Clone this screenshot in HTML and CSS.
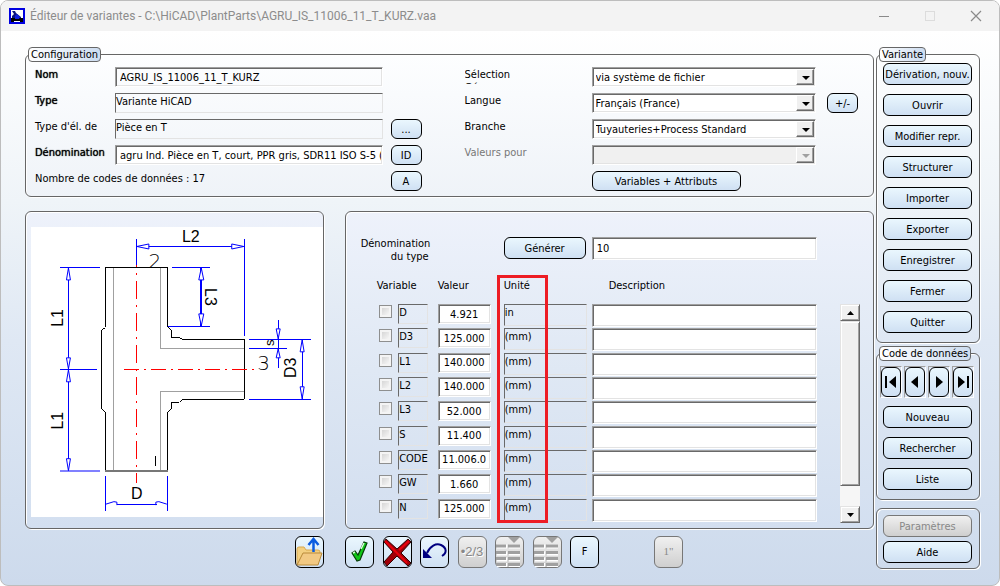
FILE: index.html
```html
<!DOCTYPE html>
<html lang="fr">
<head>
    <meta charset="UTF-8">
    <title>Éditeur de variantes</title>
    <link rel="stylesheet" href="styles.css">
</head>
<body>
    <div class="window">
        <header class="titlebar">
            <svg class="app-icon" width="16" height="16" viewBox="0 0 16 16">
                <rect x="1" y="1" width="14" height="14" fill="#fff" stroke="#0000e0" stroke-width="2"/>
                <path d="M3 3h3l1 2 5 4v2H3V8l2-2z" fill="#0a1480"/>
                <path d="M2 10h12v4h-3v-1H5v1H2z" fill="#000"/>
                <path d="M6 8l2-2 3 3-1 2H6z" fill="#1020e0"/>
            </svg>
            <h1>Éditeur de variantes - C:\HiCAD\PlantParts\AGRU_IS_11006_11_T_KURZ.vaa</h1>
            <div class="window-buttons">
                <button type="button" aria-label="Réduire"><svg width="12" height="12"><path d="M1 6.500h10" stroke="#8a8a8a"/></svg></button>
                <button type="button" aria-label="Agrandir" disabled><svg width="12" height="12"><rect x="1.500" y="1.500" width="9" height="9" fill="none" stroke="#dcdcdc"/></svg></button>
                <button type="button" aria-label="Fermer la fenêtre"><svg width="12" height="12"><path d="M1 1l10 10M11 1L1 11" stroke="#8a8a8a" stroke-width="1.200"/></svg></button>
            </div>
        </header>

        <div class="content">
            <main class="main">
                <!-- Configuration -->
                <fieldset class="group config">
                    <legend>Configuration</legend>
                    <div class="config-columns">
                        <div class="config-left">
                            <label class="strong" for="nom">Nom</label>
                            <input class="field plain padded" id="nom" type="text" value="AGRU_IS_11006_11_T_KURZ" readonly>
                            <span></span>

                            <span class="strong">Type</span>
                            <output class="display">Variante HiCAD</output>
                            <span></span>

                            <span>Type d'él. de</span>
                            <output class="display">Pièce en T</output>
                            <button type="button" class="btn">...</button>

                            <label class="strong" for="denomination">Dénomination</label>
                            <input class="field padded" id="denomination" type="text" value="agru Ind. Pièce en T, court, PPR gris, SDR11 ISO S-5 (">
                            <button type="button" class="btn">ID</button>

                            <span class="count">Nombre de codes de données : 17</span>
                            <button type="button" class="btn">A</button>
                        </div>
                        <div class="config-right">
                            <label class="clipped" for="selection">Sélection<br>Gé</label>
                            <div class="combo">
                                <select id="selection"><option>via système de fichier</option></select>
                            </div>
                            <span></span>

                            <label for="langue">Langue</label>
                            <div class="combo">
                                <select id="langue"><option>Français (France)</option></select>
                            </div>
                            <button type="button" class="btn">+/-</button>

                            <label for="branche">Branche</label>
                            <div class="combo">
                                <select id="branche"><option>Tuyauteries+Process Standard</option></select>
                            </div>
                            <span></span>

                            <label class="dimmed" for="valeurs">Valeurs pour</label>
                            <div class="combo disabled">
                                <select id="valeurs" disabled><option></option></select>
                            </div>
                            <span></span>

                            <span></span>
                            <button type="button" class="btn attributes">Variables + Attributs</button>
                        </div>
                    </div>
                </fieldset>

                <div class="panels">
                    <!-- Part drawing -->
                    <section class="group drawing">
                        <svg viewBox="0 0 292 290" shape-rendering="crispEdges">
                            <rect width="292" height="290" fill="#fff"/>
                            <g fill="none" stroke="#a0a0a0">
                                <path d="M82.500 41V244M129.500 41V121.500H213M213 164.500H129.500V244"/>
                            </g>
                            <g fill="none" stroke="#000">
                                <path d="M74.500 244.500V185.500L70.500 181.500V103.500L74.500 100.500V40.500H136.500V99.500L140.500 103.500V110.500H148.500L151.500 112.500H213.500V172.500H151.500L148.500 175.500H140.500V182.500L136.500 185.500V244.500"/>
                                <path d="M124.500 229v10"/>
                            </g>
                            <path d="M74 244.500h63" stroke="#777" stroke-width="2"/>
                            <g fill="none" stroke="#f00">
                                <path d="M105.500 38V256" stroke-dasharray="18 6 2 6" stroke-dashoffset="16"/>
                                <path d="M93 142.500H227" stroke-dasharray="15 5 2 5"/>
                            </g>
                            <g fill="none" stroke="#00f">
                                <path d="M105.500 12V38M213.500 12V109M106 19.500H213"/>
                                <path d="M29 40.500H69M29 142.500H66M37.500 41V244"/>
                                <path d="M141 40.500H179M137 99.500H179"/>
                                <path d="M170 41V99" stroke-width="2"/>
                                <path d="M218 112.500H280M218 121.500H256M218 172.500H280M247.500 93V141M271.500 113V172"/>
                                <path d="M74.500 249V284M136.500 249V284M86 277.500H126"/>
                                <path d="M29 244.500H69" stroke="#8080ff" stroke-width="2"/>
                            </g>
                            <g fill="#fff" stroke="#00f" shape-rendering="auto">
                                <path d="M106 19.500l12-2.500v5zM213 19.500l-12-2.500v5z"/>
                                <path d="M37.500 41l-2 12h4zM37.500 142l-2-11h4zM37.500 143l-2 12h4zM37.500 244l-2-12h4z"/>
                                <path d="M170.500 41l-2.500 12h5zM170.500 99l-2.500-12h5z"/>
                                <path d="M247.500 112l-2-10h4zM247.500 122l-2 9h4z"/>
                                <path d="M271.500 113l-2 12h4zM271.500 172l-2-12h4z"/>
                                <path d="M75 277.500l8-2.500 3 .5v3M136 277.500l-8-2.500-3 .5v3" fill="none"/>
                            </g>
                            <g class="dim">
                                <text x="160" y="15">L2</text>
                                <text transform="translate(32 91) rotate(-90)">L1</text>
                                <text transform="translate(32 194) rotate(-90)">L1</text>
                                <text transform="translate(174 70) rotate(90)">L3</text>
                                <text class="small" transform="translate(243 116) rotate(-90)">s</text>
                                <text transform="translate(265 141) rotate(-90)">D3</text>
                                <text x="106" y="272">D</text>
                            </g>
                            <g class="port">
                                <svg width="292" height="40"><text x="124" y="41">2</text></svg>
                                <text x="233" y="143">3</text>
                            </g>
                        </svg>
                    </section>

                    <!-- Variables -->
                    <section class="group variables">
                        <div class="type-row">
                            <label for="type-name">Dénomination du type</label>
                            <button type="button" class="btn tall">Générer</button>
                            <input class="field tall" id="type-name" type="text" value="10">
                        </div>
                        <div class="table-row">
                            <div class="table-wrap">
                                <table>
                                    <thead>
                                        <tr><th class="col-variable" colspan="2">Variable</th><th class="col-value">Valeur</th><th class="col-unit">Unité</th><th class="col-description">Description</th></tr>
                                    </thead>
                                    <tbody>
                                        <tr>
                                            <td class="check"><input type="checkbox" aria-label="D"></td>
                                            <td class="name"><span class="display">D</span></td>
                                            <td class="value"><input class="field" type="text" value="4.921" aria-label="Valeur D"></td>
                                            <td class="unit"><span class="display">in</span></td>
                                            <td><input class="field tall" type="text" aria-label="Description D"></td>
                                        </tr>
                                        <tr>
                                            <td class="check"><input type="checkbox" aria-label="D3"></td>
                                            <td class="name"><span class="display">D3</span></td>
                                            <td class="value"><input class="field" type="text" value="125.000" aria-label="Valeur D3"></td>
                                            <td class="unit"><span class="display">(mm)</span></td>
                                            <td><input class="field tall" type="text" aria-label="Description D3"></td>
                                        </tr>
                                        <tr>
                                            <td class="check"><input type="checkbox" aria-label="L1"></td>
                                            <td class="name"><span class="display">L1</span></td>
                                            <td class="value"><input class="field" type="text" value="140.000" aria-label="Valeur L1"></td>
                                            <td class="unit"><span class="display">(mm)</span></td>
                                            <td><input class="field tall" type="text" aria-label="Description L1"></td>
                                        </tr>
                                        <tr>
                                            <td class="check"><input type="checkbox" aria-label="L2"></td>
                                            <td class="name"><span class="display">L2</span></td>
                                            <td class="value"><input class="field" type="text" value="140.000" aria-label="Valeur L2"></td>
                                            <td class="unit"><span class="display">(mm)</span></td>
                                            <td><input class="field tall" type="text" aria-label="Description L2"></td>
                                        </tr>
                                        <tr>
                                            <td class="check"><input type="checkbox" aria-label="L3"></td>
                                            <td class="name"><span class="display">L3</span></td>
                                            <td class="value"><input class="field" type="text" value="52.000" aria-label="Valeur L3"></td>
                                            <td class="unit"><span class="display">(mm)</span></td>
                                            <td><input class="field tall" type="text" aria-label="Description L3"></td>
                                        </tr>
                                        <tr>
                                            <td class="check"><input type="checkbox" aria-label="S"></td>
                                            <td class="name"><span class="display">S</span></td>
                                            <td class="value"><input class="field" type="text" value="11.400" aria-label="Valeur S"></td>
                                            <td class="unit"><span class="display">(mm)</span></td>
                                            <td><input class="field tall" type="text" aria-label="Description S"></td>
                                        </tr>
                                        <tr>
                                            <td class="check"><input type="checkbox" aria-label="CODE"></td>
                                            <td class="name"><span class="display">CODE</span></td>
                                            <td class="value"><input class="field" type="text" value="11.006.0" aria-label="Valeur CODE"></td>
                                            <td class="unit"><span class="display">(mm)</span></td>
                                            <td><input class="field tall" type="text" aria-label="Description CODE"></td>
                                        </tr>
                                        <tr>
                                            <td class="check"><input type="checkbox" aria-label="GW"></td>
                                            <td class="name"><span class="display">GW</span></td>
                                            <td class="value"><input class="field" type="text" value="1.660" aria-label="Valeur GW"></td>
                                            <td class="unit"><span class="display">(mm)</span></td>
                                            <td><input class="field tall" type="text" aria-label="Description GW"></td>
                                        </tr>
                                        <tr>
                                            <td class="check"><input type="checkbox" aria-label="N"></td>
                                            <td class="name"><span class="display">N</span></td>
                                            <td class="value"><input class="field" type="text" value="125.000" aria-label="Valeur N"></td>
                                            <td class="unit"><span class="display">(mm)</span></td>
                                            <td><input class="field tall" type="text" aria-label="Description N"></td>
                                        </tr>
                                    </tbody>
                                </table>
                                <div class="highlight"></div>
                            </div>
                            <div class="scrollbar">
                                <button type="button" aria-label="Défiler vers le haut"><svg width="7" height="4"><path d="M0 4L3.500 0L7 4z"/></svg></button>
                                <div class="thumb"></div>
                                <div class="track"></div>
                                <button type="button" aria-label="Défiler vers le bas"><svg width="7" height="4"><path d="M0 0h7L3.500 4z"/></svg></button>
                            </div>
                        </div>
                    </section>
                </div>

                <!-- Toolbar -->
                <div class="toolbar">
                    <button type="button" class="btn tool" aria-label="Charger">
                        <svg width="27" height="30" viewBox="0 0 27 30">
                            <path d="M1 27V12q0-2 2-2h5l2 3h12q2 0 2 2v5" fill="#f3cf80" stroke="#d9a94e"/>
                            <path d="M1 28l6-12h19l-4 12z" fill="#f2c983" stroke="#b98a3a"/>
                            <path d="M17.500 15V4M12.500 8l5-6 5 6" fill="none" stroke="#0a5be0" stroke-width="2.500"/>
                        </svg>
                    </button>
                    <div class="tool-group">
                        <button type="button" class="btn tool" aria-label="Valider">
                            <svg width="27" height="30" viewBox="0 0 27 30">
                                <path d="M6 16l3-2 3 4 6-13 3 1-7 17-3 1z" fill="#10c818" stroke="#063c08" stroke-width="1.200"/>
                                <path d="M7 16l2-1M18 6l-3 6" stroke="#d8ffd8" stroke-width="1.500"/>
                            </svg>
                        </button>
                        <button type="button" class="btn tool" aria-label="Annuler">
                            <svg width="27" height="30" viewBox="0 0 27 30">
                                <path d="M2 2l11 10L24 2l3 3-10 11 10 10-3 3-11-10L3 29l-3-4 9-10L0 5z" fill="#a00008" stroke="#300"/>
                                <path d="M1 4l22 22M25 4L15 13" stroke="#e8000c" stroke-width="2"/>
                            </svg>
                        </button>
                        <button type="button" class="btn tool" aria-label="Rétablir">
                            <svg width="27" height="30" viewBox="0 0 27 30">
                                <path d="M6 16C9 9 15 6 20 8c6 3 6 8 1 11" fill="none" stroke="#000080" stroke-width="2"/>
                                <path d="M2 12v9h9z" fill="#000080"/>
                            </svg>
                        </button>
                        <button type="button" class="btn tool fraction" disabled>•2/3</button>
                        <button type="button" class="btn tool" aria-label="Tableau 1" disabled>
                            <svg width="27" height="30" viewBox="0 0 27 30">
                                <path d="M1 9.500h10M13 9.500h11M1 16.500h10M13 16.500h11M1 22.500h10M13 22.500h11M1 28h10M13 28h11" stroke="#fff" stroke-width="4"/>
                                <path d="M0 9h10M12 9h12M0 15.500h10M12 15.500h12M0 21.500h10M12 21.500h12M0 27.500h10M12 27.500h12" stroke="#a0a0a0" stroke-width="3"/>
                                <path d="M12 0h12l-6 6z" fill="#a0a0a0"/>
                            </svg>
                        </button>
                        <button type="button" class="btn tool" aria-label="Tableau 2" disabled>
                            <svg width="27" height="30" viewBox="0 0 27 30">
                                <path d="M1 9.500h10M13 9.500h11M1 16.500h10M13 16.500h11M1 22.500h10M13 22.500h11M1 28h10M13 28h11" stroke="#fff" stroke-width="4"/>
                                <path d="M0 9h10M12 9h12M0 15.500h10M12 15.500h12M0 21.500h10M12 21.500h12M0 27.500h10M12 27.500h12" stroke="#a0a0a0" stroke-width="3"/>
                                <path d="M12 0h12l-6 6z" fill="#a0a0a0"/>
                            </svg>
                        </button>
                        <button type="button" class="btn tool">F</button>
                    </div>
                    <button type="button" class="btn tool inch" disabled>1"</button>
                </div>
            </main>

            <aside class="sidebar">
                <fieldset class="group">
                    <legend>Variante</legend>
                    <div class="stack">
                        <button type="button" class="btn tall">Dérivation, nouv.</button>
                        <button type="button" class="btn tall">Ouvrir</button>
                        <button type="button" class="btn tall">Modifier repr.</button>
                        <button type="button" class="btn tall">Structurer</button>
                        <button type="button" class="btn tall">Importer</button>
                        <button type="button" class="btn tall">Exporter</button>
                        <button type="button" class="btn tall">Enregistrer</button>
                        <button type="button" class="btn tall">Fermer</button>
                        <button type="button" class="btn tall">Quitter</button>
                    </div>
                </fieldset>
                <fieldset class="group">
                    <legend>Code de données</legend>
                    <div class="nav">
                        <span class="nav-frame"><button type="button" class="btn" aria-label="Premier"><svg width="12" height="14"><path d="M0 1h2v12H0zM11 1v12L4 7z"/></svg></button></span>
                        <span class="nav-frame"><button type="button" class="btn" aria-label="Précédent"><svg width="12" height="14"><path d="M9 1v12L2 7z"/></svg></button></span>
                        <span class="nav-frame"><button type="button" class="btn" aria-label="Suivant"><svg width="12" height="14"><path d="M3 1v12l7-6z"/></svg></button></span>
                        <span class="nav-frame"><button type="button" class="btn" aria-label="Dernier"><svg width="12" height="14"><path d="M10 1h2v12h-2zM1 1v12l7-6z"/></svg></button></span>
                    </div>
                    <div class="stack">
                        <button type="button" class="btn tall">Nouveau</button>
                        <button type="button" class="btn tall">Rechercher</button>
                        <button type="button" class="btn tall">Liste</button>
                    </div>
                </fieldset>
                <section class="group help">
                    <button type="button" class="btn tall" disabled>Paramètres</button>
                    <button type="button" class="btn tall">Aide</button>
                </section>
            </aside>
        </div>
    </div>
</body>
</html>
```
FILE: styles.css
```css
/* Reset and Base Styles */
* {
    margin: 0;
    padding: 0;
    box-sizing: border-box;
}

body {
    font-family: "DejaVu Sans Condensed", "Noto Sans", sans-serif;
    font-size: 11px;
    line-height: 13px;
    color: #000;
    background: #fff;
}

button, input, select, output {
    font: inherit;
    color: inherit;
}

.window {
    min-height: 100vh;
    border: 1px solid #bdbdbd;
    border-radius: 8px;
    background: linear-gradient(#fff 30px, #eff4f8 200px, #dfe8f4 340px, #d3dfef 500px, #cddaec);
    overflow: hidden;
}

/* Title bar */
.titlebar {
    display: flex;
    align-items: center;
    height: 30px;
    padding-left: 8px;
    background: #f3f3f3;
}

.titlebar h1 {
    flex: 1;
    margin-left: 5px;
    font-family: Roboto, "Open Sans", sans-serif;
    font-size: 12px;
    font-weight: 400;
    line-height: 16px;
    color: #8c8c8c;
    white-space: nowrap;
}

.window-buttons {
    display: flex;
}

.window-buttons button {
    display: flex;
    align-items: center;
    justify-content: center;
    width: 46px;
    height: 30px;
    border: none;
    background: none;
}

/* Page layout */
.content {
    display: flex;
    gap: 2px;
    padding: 16px 19px 0 24px;
}

.main {
    flex: 1;
    min-width: 0;
}

.sidebar {
    width: 104px;
}

/* Group boxes */
.group {
    min-width: 0;
    border: 1px solid #666;
    border-radius: 6px;
    box-shadow: inset 1px 1px 0 #fff, 1px 1px 0 #fff;
}

.group legend {
    margin-left: -4px;
    padding: 0 2px;
    border: 1px solid #666;
    border-radius: 4px;
    background: linear-gradient(to right, #fff, #ccdcf0);
    white-space: nowrap;
}

/* Buttons */
.btn {
    height: 20px;
    border: 1px solid #000;
    border-radius: 6px;
    background: linear-gradient(#eaf7fe, #cfe0f3);
    text-align: center;
    white-space: nowrap;
}

.btn.tall {
    height: 22px;
}

.btn:disabled {
    border-color: #777;
    background: linear-gradient(#f0f0f0, #cfcfcf);
    color: #888;
}

/* Sunken fields */
.field, .combo {
    width: 100%;
    height: 20px;
    border: 1px solid;
    border-color: #a0a0a0 #fff #fff #a0a0a0;
    background: #fff;
    box-shadow: inset 1px 1px 0 #696969, inset -1px -1px 0 #e3e3e3;
}

.field {
    padding: 0 4px;
}

.field.padded {
    padding: 0 1px 0 4px;
}

.field.plain {
    background: transparent;
}

.field.tall {
    height: 23px;
}

.display {
    display: block;
    height: 20px;
    border: 1px solid;
    border-color: #696969 #e3e3e3 #e3e3e3 #696969;
    line-height: 15px;
}

/* Drop-downs */
.combo {
    position: relative;
}

.combo select {
    width: 100%;
    height: 100%;
    padding-left: 3px;
    border: none;
    background: transparent;
    appearance: none;
}

.combo::before {
    content: "";
    position: absolute;
    top: 1px;
    right: 1px;
    bottom: 1px;
    width: 16px;
    border: 1px solid;
    border-color: #fff #696969 #696969 #fff;
    background: #f0f0f0;
    box-shadow: inset -1px -1px 0 #a0a0a0;
    pointer-events: none;
}

.combo::after {
    content: "";
    position: absolute;
    top: 8px;
    right: 5px;
    border: 4px solid transparent;
    border-top-color: #000;
    border-bottom: none;
    pointer-events: none;
}

.combo.disabled {
    background: #f0f0f0;
}

.combo.disabled::after {
    border-top-color: #a0a0a0;
}

/* Configuration */
.config {
    padding: 5px 15px 5px 9px;
    background: linear-gradient(#fdfeff, #eff3f8);
}

.group.config legend {
    margin-left: -7px;
}

.config-columns {
    display: grid;
    grid-template-columns: 387fr 394fr;
    gap: 43px;
}

.config-left, .config-right {
    display: grid;
    grid-template-columns: 72px 1fr 31px;
    grid-auto-rows: 20px;
    gap: 6px 8px;
    line-height: 15px;
}

.config-right {
    grid-template-columns: 116px 1fr 31px;
    column-gap: 11px;
}

.strong {
    text-shadow: 0 0 1px #000;
}

.dimmed {
    color: #777;
}

/* Only the first line of the caption fits */
.clipped {
    height: 17px;
    padding-top: 1px;
    line-height: 13px;
    overflow: hidden;
}

.count {
    grid-column: span 2;
}

.attributes {
    width: 149px;
}

/* Panels */
.panels {
    display: grid;
    grid-template-columns: 299fr 530fr;
    gap: 21px;
    margin-top: 14px;
}

.panels .group {
    background: linear-gradient(#eef2fb, #dfe8f4 50%, #d3dff0);
}

.drawing {
    padding: 15px 0 11px 5px;
}

.drawing svg {
    display: block;
    width: 100%;
}

.dim {
    font-family: "Liberation Sans", sans-serif;
    font-size: 16px;
    text-anchor: middle;
}

.dim .small {
    font-size: 13px;
}

.port {
    font-family: "DejaVu Sans Light", "DejaVu Sans", sans-serif;
    font-size: 20px;
    font-weight: 200;
    text-anchor: middle;
}

.variables {
    padding: 25px 13px 4px 15px;
}

.type-row {
    display: flex;
    align-items: flex-start;
    margin-right: 43px;
}

.type-row label {
    width: 68px;
    margin-right: 75px;
    text-align: right;
}

.type-row .btn {
    width: 82px;
    margin-right: 6px;
}

.type-row .field {
    flex: 1;
    min-width: 0;
}

.table-row {
    display: flex;
    gap: 23px;
    margin: 16px 0 0 16px;
}

.table-wrap {
    flex: 1;
    position: relative;
}

table {
    width: 100%;
    height: 244px;
    border-collapse: collapse;
    table-layout: fixed;
}

th {
    height: 25px;
    font-weight: 400;
    text-align: left;
    vertical-align: top;
}

td {
    vertical-align: top;
}

.col-variable {
    width: 61px;
}

.col-value {
    width: 66px;
}

.col-unit {
    width: 88px;
}

.col-description {
    padding-left: 17px;
}

.check input {
    display: block;
    width: 13px;
    height: 13px;
    margin: 1px 0 0 2px;
    border: 1px solid #8e8f8f;
    background: linear-gradient(135deg, #cdcdcd, #fff);
    box-shadow: inset 0 0 0 2px #f4f4f4;
    appearance: none;
}

.name .display {
    width: 30px;
    margin-left: -9px;
}

.value .field {
    width: 53px;
    padding: 0;
    text-align: center;
}

.unit .display {
    width: 83px;
    height: 22px;
}

/* Red frame over the unit column */
.highlight {
    position: absolute;
    top: -4px;
    bottom: 0;
    left: 120px;
    width: 51px;
    border: 3px solid #ed1c24;
}

/* Scrollbar */
.scrollbar {
    display: flex;
    flex-direction: column;
    width: 20px;
    margin-top: 25px;
}

.scrollbar button, .thumb {
    border: 1px solid;
    border-color: #e3e3e3 #696969 #696969 #e3e3e3;
    background: #f0f0f0;
    box-shadow: inset 1px 1px 0 #fff, inset -1px -1px 0 #a0a0a0;
}

.scrollbar button {
    display: flex;
    align-items: center;
    justify-content: center;
    height: 17px;
}

.thumb {
    flex: 8;
}

.track {
    flex: 1;
    background: #f6f6f6;
}

/* Toolbar */
.toolbar {
    display: flex;
    margin: 7px 0 0 270px;
}

.tool {
    display: flex;
    align-items: center;
    justify-content: center;
    width: 29px;
    height: 32px;
}

.tool-group {
    display: flex;
    justify-content: space-between;
    width: 254px;
    margin: 0 55px 0 21px;
}

.fraction {
    font-family: "Liberation Sans", sans-serif;
    font-size: 13px;
    text-shadow: 1px 1px 0 #fff;
}

.inch {
    font-family: "Liberation Serif", serif;
}

/* Sidebar */
.sidebar .group {
    margin-bottom: 3px;
    padding: 1px 7px 9px 6px;
}

.stack {
    display: flex;
    flex-direction: column;
    gap: 9px;
}

.nav {
    display: flex;
    justify-content: space-between;
    margin: 4px -2px 8px -3px;
}

.nav-frame {
    border: 1px solid;
    border-color: #a0a0a0 #fff #fff #a0a0a0;
}

.nav-frame .btn {
    display: flex;
    align-items: center;
    justify-content: center;
    width: 20px;
    height: 30px;
}

.sidebar .help {
    display: flex;
    flex-direction: column;
    gap: 4px;
    margin-top: 8px;
    padding: 6px 7px 5px 6px;
}
```
